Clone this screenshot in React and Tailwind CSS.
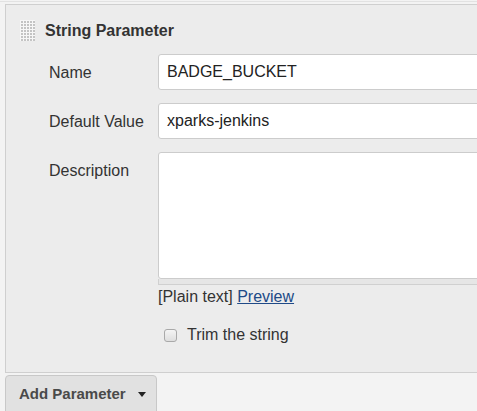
import React from "react";

function Grip() {
  const dots = [];
  for (let r = 0; r < 7; r++) {
    for (let c = 0; c < 5; c++) {
      dots.push(<rect key={`${r}-${c}`} x={1 + c * 3} y={1 + r * 3} width="2" height="2" fill="#c4c4c4" />);
    }
  }
  return (
    <svg width="15" height="21" viewBox="0 0 15 21" className="block">
      <rect x="0" y="0" width="15" height="21" fill="#f7f7f7" />
      {dots}
    </svg>
  );
}

export default function App() {
  return (
    <div
      className="w-[477px] h-[411px] overflow-hidden bg-[#f3f3f3] text-[#333]"
      style={{ fontFamily: '"Liberation Sans", Arial, sans-serif' }}
    >
      <div className="h-[1px]" />
      <div className="h-px bg-[#e2e2e2]" />
      <div className="h-[2px]" />
      <div className="ml-[5px] w-[520px] h-[369px] bg-[#ececec] border-l border-t border-b border-[#cfcfcf]">
        <div className="flex items-center pl-[14px] pt-[15px] h-[36px]">
          <Grip />
          <span className="ml-[10px] text-[16px] font-bold leading-[18px] text-[#333]">String Parameter</span>
        </div>
        <div className="grid grid-cols-[152px_1fr] mt-[13px] text-[16px] leading-[18px]">
          <div className="pl-[43px] pt-[10px]">Name</div>
          <div className="h-[36px] bg-white border border-[#ccc] rounded-[3px] pl-[8px] flex items-center text-[#222]">BADGE_BUCKET</div>

          <div className="pl-[43px] pt-[10px] mt-[13px]">Default Value</div>
          <div className="mt-[13px] h-[36px] bg-white border border-[#ccc] rounded-[3px] pl-[8px] flex items-center text-[#222]">xparks-jenkins</div>

          <div className="pl-[43px] pt-[10px] mt-[13px]">Description</div>
          <div className="mt-[13px]">
            <div className="h-[127px] bg-white border border-[#ccc] rounded-[3px]" />
            <div className="h-[6px] bg-[#e6e6e6] border-b border-[#c4c4c4] border-l border-[#d0d0d0]" />
            <div className="mt-[3px] text-[#333]">
              [Plain text] <span className="text-[#204a87] underline">Preview</span>
            </div>
            <div className="mt-[19px] flex items-center h-[20px]">
              <span className="ml-[6px] w-[13px] h-[13px] rounded-[3px] border border-[#a9a9a9] bg-gradient-to-b from-[#f4f4f4] to-[#dedede]" />
              <span className="ml-[10px]">Trim the string</span>
            </div>
          </div>
        </div>
      </div>
      <div className="mt-[2px] ml-[5px] w-[152px] h-[50px] bg-[#e1e1e1] border border-[#c8c8c8] rounded-t-[4px] flex items-start pt-[9px] pl-[13px]">
        <span className="text-[15px] font-bold leading-[18px] text-[#4a4a4a]">Add Parameter</span>
        <svg width="8" height="5" viewBox="0 0 8 5" className="ml-[12px] mt-[7px]">
          <path d="M0 0 H8 L4 5 Z" fill="#222" />
        </svg>
      </div>
    </div>
  );
}
